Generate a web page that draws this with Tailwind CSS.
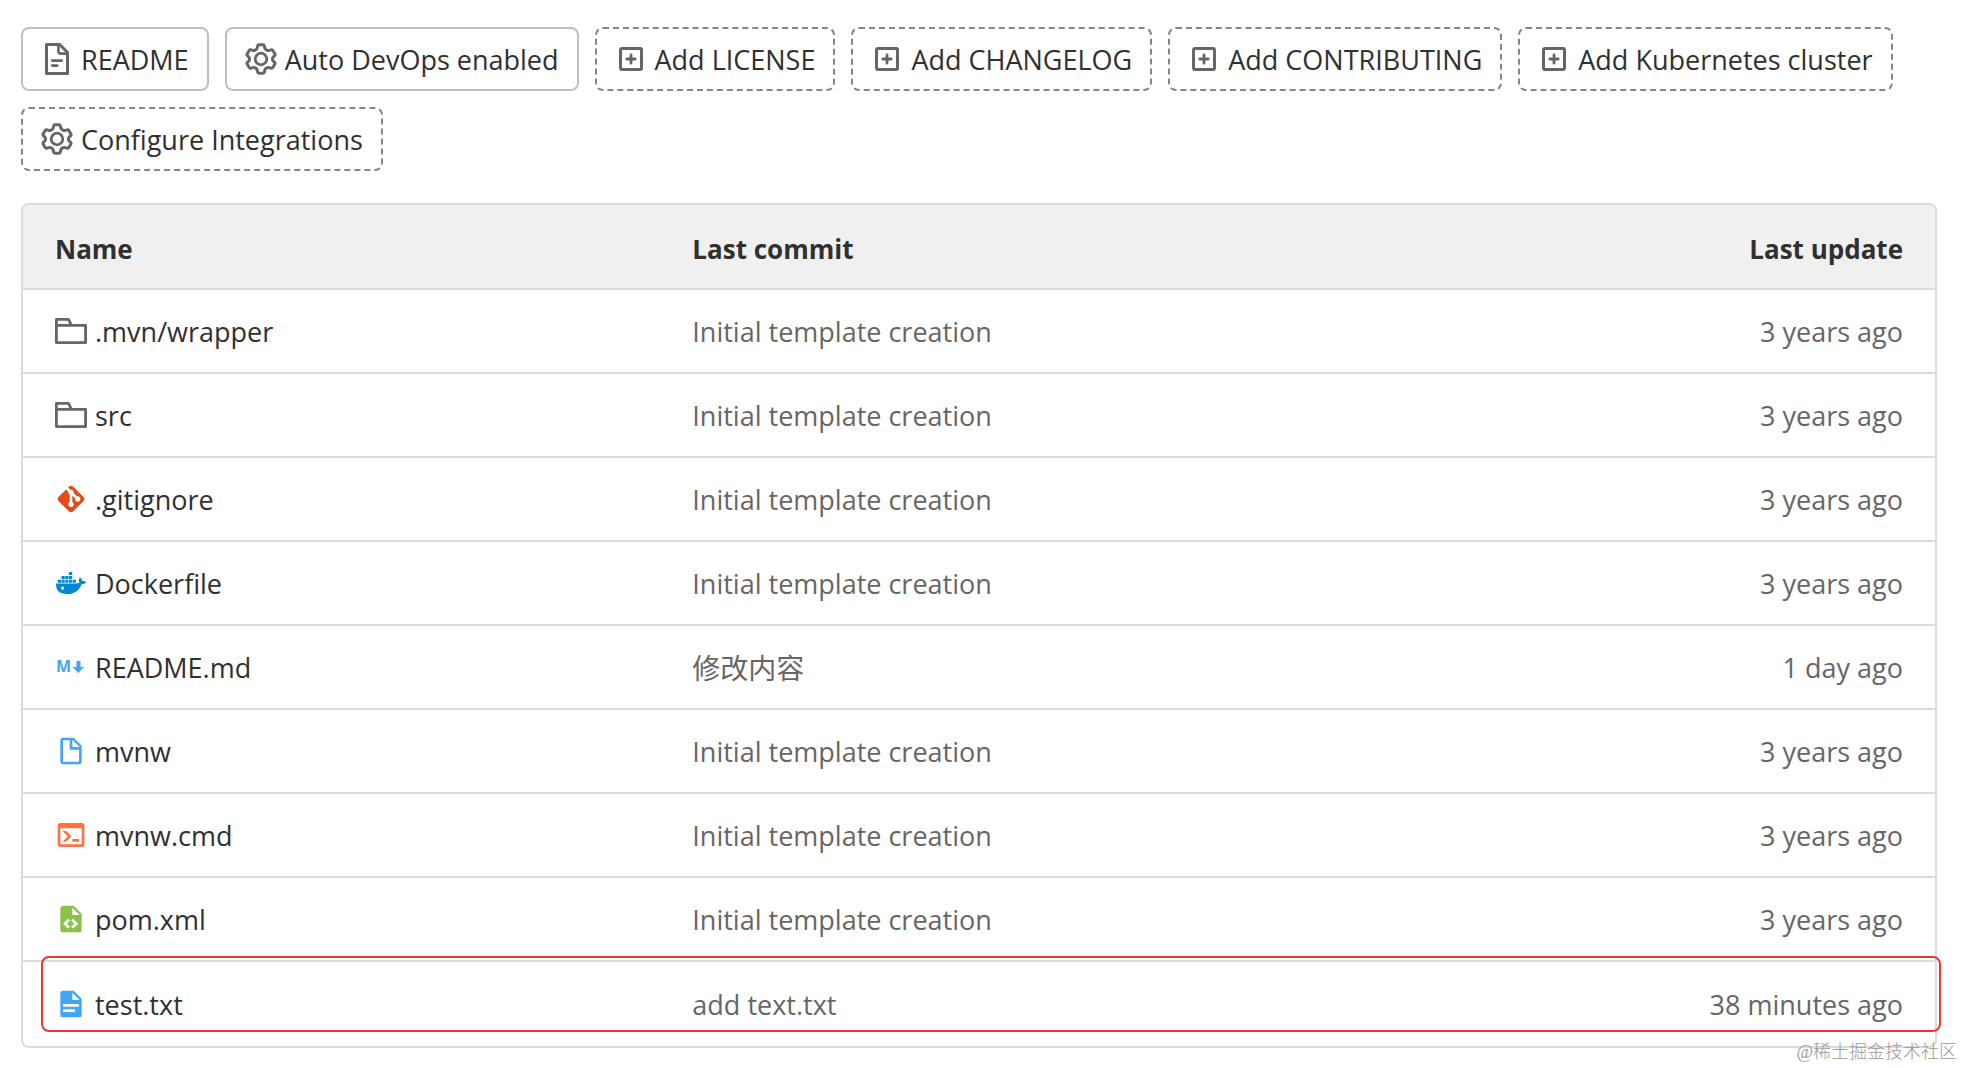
<!DOCTYPE html>
<html lang="en">
<head>
    <meta charset="UTF-8">
    <meta name="viewport" content="width=device-width, initial-scale=1.0">
    <title>Files</title>
    <script src="https://cdn.jsdelivr.net/npm/@tailwindcss/browser@4"></script>
</head>
<body class="relative min-h-screen bg-white pt-[27px] pl-[21px] pr-[26px] pb-[18px] font-['Open_Sans','Noto_Sans_CJK_SC',sans-serif] text-[27px] leading-9 text-[#303030]">
    <!-- Shared icons -->
    <svg class="hidden">
        <symbol id="doc-text" viewBox="0 0 16 16">
            <path fill="none" stroke="currentColor" stroke-width="1.5" stroke-linejoin="round" d="M2.75.75h6.6l3.9 4v10.5H2.75z"></path>
            <path fill="none" stroke="currentColor" stroke-width="1.3" d="M8.7.9v3.2c0 .8.4 1.2 1.2 1.2h3.2"></path>
            <path stroke="currentColor" stroke-width="1.4" stroke-linecap="round" d="M5.6 8.8h4.8M5.6 11.3h2.5"></path>
        </symbol>
        <symbol id="settings" viewBox="0 0 16 16">
            <path fill="none" stroke="currentColor" stroke-width="1.5" stroke-linejoin="round" d="M9 .9Q9.6 .9 9.7 1.5L9.9 2.5Q10.1 3.1 10.7 3.4L11 3.6Q11.5 3.9 12.1 3.7L13 3.4Q13.6 3.2 13.9 3.7L14.9 5.4Q15.2 5.9 14.8 6.3L14.1 7Q13.7 7.4 13.7 8Q13.7 8.6 14.1 9L14.8 9.7Q15.2 10.1 14.9 10.6L13.9 12.3Q13.6 12.8 13 12.6L12.1 12.3Q11.5 12.1 11 12.4L10.7 12.6Q10.1 12.9 9.9 13.5L9.7 14.5Q9.6 15.1 9 15.1H7Q6.4 15.1 6.3 14.5L6.1 13.5Q5.9 12.9 5.3 12.6L5 12.4Q4.5 12.1 3.9 12.3L3 12.6Q2.4 12.8 2.1 12.3L1.1 10.6Q.8 10.1 1.2 9.7L1.9 9Q2.3 8.6 2.3 8Q2.3 7.4 1.9 7L1.2 6.3Q.8 5.9 1.1 5.4L2.1 3.7Q2.4 3.2 3 3.4L3.9 3.7Q4.5 3.9 5 3.6L5.3 3.4Q5.9 3.1 6.1 2.5L6.3 1.5Q6.4 .9 7 .9z"></path>
            <circle cx="8" cy="8" r="2.9" fill="none" stroke="currentColor" stroke-width="1.4"></circle>
        </symbol>
        <symbol id="plus-square" viewBox="0 0 16 16">
            <rect x="2.75" y="2.75" width="10.5" height="10.5" rx=".7" fill="none" stroke="currentColor" stroke-width="1.5"></rect>
            <path stroke="currentColor" stroke-width="1.4" stroke-linecap="round" d="M8 5.9v4.2M5.9 8h4.2"></path>
        </symbol>
        <symbol id="folder" viewBox="0 0 16 16">
            <path fill="none" stroke="currentColor" stroke-width="1.4" stroke-linejoin="round" d="M.7 5.2h14.6v8.6H.7zM.7 5.2v-3h6l1.6 3"></path>
        </symbol>
    </svg>

    <!-- Project shortcuts -->
    <nav class="flex flex-wrap gap-4">
        <a href="#" class="flex items-center gap-2 rounded-lg border-2 border-[#bfbfbf] px-[18px] py-[11px]">
            <svg class="size-8 flex-none text-[#666]"><use href="#doc-text"></use></svg>
            <span class="pt-0.5">README</span>
        </a>
        <a href="#" class="flex items-center gap-2 rounded-lg border-2 border-[#bfbfbf] px-[18px] py-[11px]">
            <svg class="size-8 flex-none text-[#666]"><use href="#settings"></use></svg>
            <span class="pt-0.5">Auto DevOps enabled</span>
        </a>
        <a href="#" class="flex items-center gap-2 rounded-lg border-2 border-dashed border-[#868686] px-[18px] py-[11px]">
            <svg class="size-8 flex-none text-[#666]"><use href="#plus-square"></use></svg>
            <span class="pt-0.5">Add LICENSE</span>
        </a>
        <a href="#" class="flex items-center gap-2 rounded-lg border-2 border-dashed border-[#868686] px-[18px] py-[11px]">
            <svg class="size-8 flex-none text-[#666]"><use href="#plus-square"></use></svg>
            <span class="pt-0.5">Add CHANGELOG</span>
        </a>
        <a href="#" class="flex items-center gap-2 rounded-lg border-2 border-dashed border-[#868686] px-[18px] py-[11px]">
            <svg class="size-8 flex-none text-[#666]"><use href="#plus-square"></use></svg>
            <span class="pt-0.5">Add CONTRIBUTING</span>
        </a>
        <a href="#" class="flex items-center gap-2 rounded-lg border-2 border-dashed border-[#868686] px-[18px] py-[11px]">
            <svg class="size-8 flex-none text-[#666]"><use href="#plus-square"></use></svg>
            <span class="pt-0.5">Add Kubernetes cluster</span>
        </a>
        <a href="#" class="flex items-center gap-2 rounded-lg border-2 border-dashed border-[#868686] px-[18px] py-[11px]">
            <svg class="size-8 flex-none text-[#666]"><use href="#settings"></use></svg>
            <span class="pt-0.5">Configure Integrations</span>
        </a>
    </nav>

    <!-- File tree -->
    <div class="relative mt-8 rounded-lg border-2 border-[#dbdbdb]">
        <table class="w-full table-fixed border-separate border-spacing-0">
            <thead class="text-[26px]">
                <tr class="h-[85px] bg-[#f0f0f0] text-left">
                    <th class="rounded-tl-md border-b-2 border-[#dbdbdb] px-8 pt-1 font-bold">Name</th>
                    <th class="border-b-2 border-[#dbdbdb] px-8 pt-1 font-bold">Last commit</th>
                    <th class="rounded-tr-md border-b-2 border-[#dbdbdb] px-8 pt-1 text-right font-bold">Last update</th>
                </tr>
            </thead>
            <tbody class="text-[#666]">
                <tr class="h-[84px]">
                    <td class="border-b-2 border-[#dbdbdb] px-8">
                        <a href="#" class="flex items-center gap-2 text-[#303030]">
                            <svg class="size-8 flex-none text-[#666]"><use href="#folder"></use></svg>
                            <span class="pt-0.5">.mvn/wrapper</span>
                        </a>
                    </td>
                    <td class="border-b-2 border-[#dbdbdb] px-8 pt-0.5"><a href="#">Initial template creation</a></td>
                    <td class="border-b-2 border-[#dbdbdb] px-8 pt-0.5 text-right">3 years ago</td>
                </tr>
                <tr class="h-[84px]">
                    <td class="border-b-2 border-[#dbdbdb] px-8">
                        <a href="#" class="flex items-center gap-2 text-[#303030]">
                            <svg class="size-8 flex-none text-[#666]"><use href="#folder"></use></svg>
                            <span class="pt-0.5">src</span>
                        </a>
                    </td>
                    <td class="border-b-2 border-[#dbdbdb] px-8 pt-0.5"><a href="#">Initial template creation</a></td>
                    <td class="border-b-2 border-[#dbdbdb] px-8 pt-0.5 text-right">3 years ago</td>
                </tr>
                <tr class="h-[84px]">
                    <td class="border-b-2 border-[#dbdbdb] px-8">
                        <a href="#" class="flex items-center gap-2 text-[#303030]">
                            <svg class="size-8 flex-none" viewBox="0 0 24 24" fill="#e64a19">
                                <path d="M2.6 10.59L8.38 4.8l1.69 1.7c-.24.85.15 1.78.93 2.23v5.54c-.6.34-1 .99-1 1.73a2 2 0 0 0 2 2 2 2 0 0 0 2-2c0-.74-.4-1.39-1-1.73V9.41l2.07 2.09c-.07.15-.07.32-.07.5a2 2 0 0 0 2 2 2 2 0 0 0 2-2 2 2 0 0 0-2-2c-.18 0-.35 0-.5.07L13.93 7.5a1.98 1.98 0 0 0-1.15-2.34c-.43-.16-.88-.2-1.28-.09L9.8 3.38l.79-.78c.78-.79 2.04-.79 2.82 0l7.99 7.99c.79.78.79 2.04 0 2.82l-7.99 7.99c-.78.79-2.04.79-2.82 0L2.6 13.41c-.79-.78-.79-2.04 0-2.82z"></path>
                            </svg>
                            <span class="pt-0.5">.gitignore</span>
                        </a>
                    </td>
                    <td class="border-b-2 border-[#dbdbdb] px-8 pt-0.5"><a href="#">Initial template creation</a></td>
                    <td class="border-b-2 border-[#dbdbdb] px-8 pt-0.5 text-right">3 years ago</td>
                </tr>
                <tr class="h-[84px]">
                    <td class="border-b-2 border-[#dbdbdb] px-8">
                        <a href="#" class="flex items-center gap-2 text-[#303030]">
                            <svg class="size-8 flex-none" viewBox="0 0 32 32" fill="#0288d1">
                                <path d="M14 5h3.200v3H14zM6.500 9h3.200v3H6.500zM10.250 9h3.200v3h-3.200zM14 9h3.200v3H14zM2.800 12.700H6v3H2.800zM6.500 12.700h3.200v3H6.500zM10.250 12.700h3.200v3h-3.200zM14 12.700h3.200v3H14zM17.750 12.700h3.200v3h-3.200z"></path>
                                <path fill-rule="evenodd" d="M1 16.500h20.200c1.500 0 2.500-.4 3.300-.9-1-1.800-.8-3.800.4-5.100 1.400.9 2.100 2.100 2.200 3.500 1.500-.2 2.900 0 3.900.7-.8 1.800-2.300 2.500-4.400 2.500C24.200 23.500 19.500 27 12 27 4.500 27 .7 23.500 1 16.500zM7.600 19.500a1.600 1.600 0 1 0 0 3.200 1.600 1.600 0 0 0 0-3.200z"></path>
                            </svg>
                            <span class="pt-0.5">Dockerfile</span>
                        </a>
                    </td>
                    <td class="border-b-2 border-[#dbdbdb] px-8 pt-0.5"><a href="#">Initial template creation</a></td>
                    <td class="border-b-2 border-[#dbdbdb] px-8 pt-0.5 text-right">3 years ago</td>
                </tr>
                <tr class="h-[84px]">
                    <td class="border-b-2 border-[#dbdbdb] px-8">
                        <a href="#" class="flex items-center gap-2 text-[#303030]">
                            <svg class="size-8 flex-none" viewBox="0 0 32 32" fill="#42a5f5">
                                <text x="1" y="21" font-family="Open Sans" font-weight="bold" font-size="16">M</text>
                                <path d="M21.500 10h4v6H29l-5.700 6-5.700-6h3.900z"></path>
                            </svg>
                            <span class="pt-0.5">README.md</span>
                        </a>
                    </td>
                    <td class="border-b-2 border-[#dbdbdb] px-8 pt-0.5"><a href="#" class="text-[28px] leading-9">修改内容</a></td>
                    <td class="border-b-2 border-[#dbdbdb] px-8 pt-0.5 text-right">1 day ago</td>
                </tr>
                <tr class="h-[84px]">
                    <td class="border-b-2 border-[#dbdbdb] px-8">
                        <a href="#" class="flex items-center gap-2 text-[#303030]">
                            <svg class="size-8 flex-none" viewBox="0 0 24 24" fill="#42a5f5">
                                <path d="M13 9h5.500L13 3.500V9M6 2h8l6 6v12a2 2 0 0 1-2 2H6a2 2 0 0 1-2-2V4c0-1.110.89-2 2-2m5 2H6v16h12v-9h-7V4z"></path>
                            </svg>
                            <span class="pt-0.5">mvnw</span>
                        </a>
                    </td>
                    <td class="border-b-2 border-[#dbdbdb] px-8 pt-0.5"><a href="#">Initial template creation</a></td>
                    <td class="border-b-2 border-[#dbdbdb] px-8 pt-0.5 text-right">3 years ago</td>
                </tr>
                <tr class="h-[84px]">
                    <td class="border-b-2 border-[#dbdbdb] px-8">
                        <a href="#" class="flex items-center gap-2 text-[#303030]">
                            <svg class="size-8 flex-none" viewBox="0 0 24 24" fill="#ff7043">
                                <path d="M20 19V7H4v12h16m0-16a2 2 0 0 1 2 2v14a2 2 0 0 1-2 2H4a2 2 0 0 1-2-2V5a2 2 0 0 1 2-2h16m-7 14v-2h5v2h-5m-3.420-4L5.570 9H8.400l3.300 3.300c.39.39.39 1.030 0 1.420L8.420 17H5.590l3.990-4z"></path>
                            </svg>
                            <span class="pt-0.5">mvnw.cmd</span>
                        </a>
                    </td>
                    <td class="border-b-2 border-[#dbdbdb] px-8 pt-0.5"><a href="#">Initial template creation</a></td>
                    <td class="border-b-2 border-[#dbdbdb] px-8 pt-0.5 text-right">3 years ago</td>
                </tr>
                <tr class="h-[84px]">
                    <td class="border-b-2 border-[#dbdbdb] px-8">
                        <a href="#" class="flex items-center gap-2 text-[#303030]">
                            <svg class="size-8 flex-none" viewBox="0 0 24 24" fill="#8bc34a">
                                <path d="M13 9h5.500L13 3.500V9M6 2h8l6 6v12a2 2 0 0 1-2 2H6a2 2 0 0 1-2-2V4c0-1.110.89-2 2-2m.12 13.500l3.740 3.740 1.420-1.410-2.330-2.330 2.330-2.330-1.420-1.410-3.740 3.740m11.160 0l-3.740-3.740-1.420 1.410 2.330 2.330-2.330 2.330 1.420 1.410 3.740-3.740z"></path>
                            </svg>
                            <span class="pt-0.5">pom.xml</span>
                        </a>
                    </td>
                    <td class="border-b-2 border-[#dbdbdb] px-8 pt-0.5"><a href="#">Initial template creation</a></td>
                    <td class="border-b-2 border-[#dbdbdb] px-8 pt-0.5 text-right">3 years ago</td>
                </tr>
                <tr class="h-[84px]">
                    <td class="px-8">
                        <a href="#" class="flex items-center gap-2 text-[#303030]">
                            <svg class="size-8 flex-none" viewBox="0 0 24 24" fill="#42a5f5">
                                <path d="M13 9h5.500L13 3.500V9M6 2h8l6 6v12a2 2 0 0 1-2 2H6a2 2 0 0 1-2-2V4c0-1.110.89-2 2-2m9 16v-2H6v2h9m3-4v-2H6v2h12z"></path>
                            </svg>
                            <span class="pt-0.5">test.txt</span>
                        </a>
                    </td>
                    <td class="px-8 pt-0.5"><a href="#">add text.txt</a></td>
                    <td class="px-8 pt-0.5 text-right">38 minutes ago</td>
                </tr>
            </tbody>
        </table>
        <!-- Highlight around the newest file -->
        <div class="pointer-events-none absolute bottom-3.5 left-[18px] -right-1.5 h-[76px] rounded-lg border-2 border-[#e8382f]"></div>
    </div>

    <div class="absolute right-1.5 bottom-1 font-['Liberation_Serif','Noto_Sans_CJK_SC',serif] text-lg font-light leading-6 text-[#999]">@稀土掘金技术社区</div>
</body>
</html>
